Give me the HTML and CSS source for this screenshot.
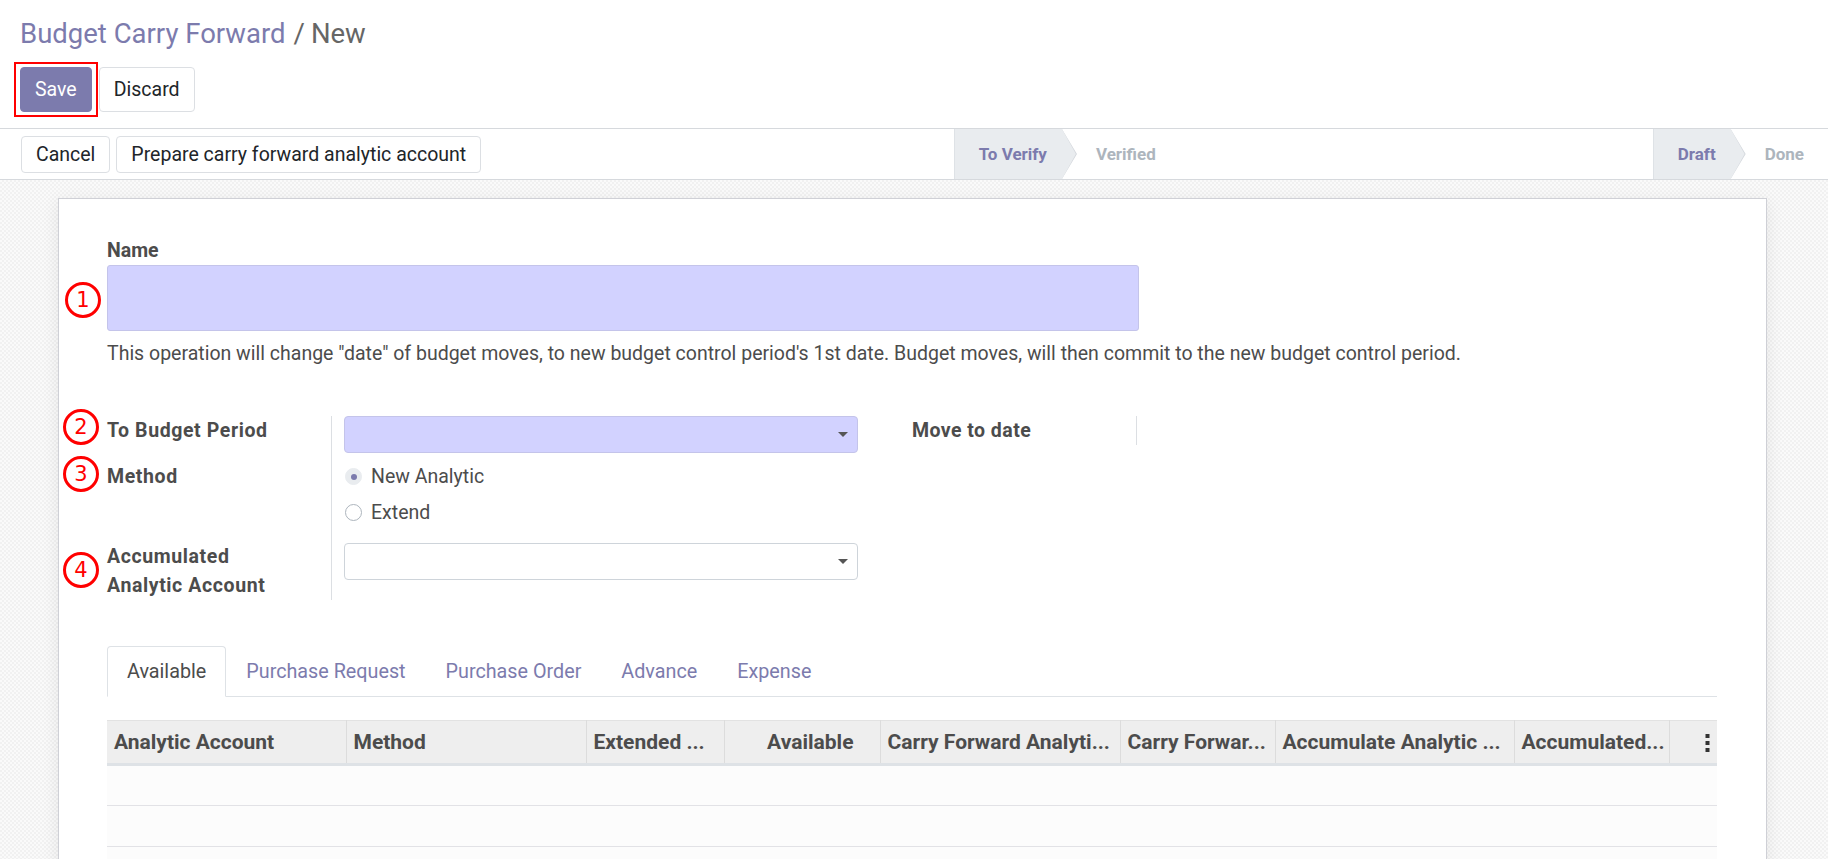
FILE: index.html
```html
<!DOCTYPE html>
<html>
<head>
<meta charset="utf-8">
<title>Budget Carry Forward / New</title>
<link rel="stylesheet" href="styles.css">
</head>
<body>
<div class="cp">
  <div class="breadcrumb"><span class="bc-link">Budget Carry Forward</span><span class="bc-sep">/</span><span class="bc-cur">New</span></div>
  <div class="cp-buttons">
    <button class="btn btn-primary btn-marked">Save</button>
    <button class="btn btn-secondary">Discard</button>
  </div>
</div>
<div class="form-header">
  <div class="header-buttons">
    <button class="btn btn-secondary btn-sm">Cancel</button>
    <button class="btn btn-secondary btn-sm">Prepare carry forward analytic account</button>
  </div>
  <div class="statusbar sb1">
    <span class="sb-item active first">To Verify</span>
    <span class="sb-item">Verified</span>
  </div>
  <div class="statusbar sb2">
    <span class="sb-item active first">Draft</span>
    <span class="sb-item last">Done</span>
  </div>
</div>
<div class="bg">
  <div class="sheet">
    <div class="field-label">Name</div>
    <div class="title-input"><span class="mark m1">1</span></div>
    <div class="help">This operation will change "date" of budget moves, to new budget control period's 1st date. Budget moves, will then commit to the new budget control period.</div>

    <div class="groups">
      <div class="group">
        <div class="g-label r1"><span class="mark m2">2</span>To Budget Period</div>
        <div class="g-field r1f">
          <div class="select required"><span class="caret"></span></div>
        </div>
        <div class="g-label r2"><span class="mark m3">3</span>Method</div>
        <div class="g-field r2f">
          <div class="radio-row"><span class="radio checked"><span class="dot"></span></span>New Analytic</div>
          <div class="radio-row second"><span class="radio"></span>Extend</div>
        </div>
        <div class="g-label r3"><span class="mark m4">4</span>Accumulated<br>Analytic Account</div>
        <div class="g-field r3f">
          <div class="select"><span class="caret"></span></div>
        </div>
      </div>
      <div class="group">
        <div class="g-label short">Move to date</div>
        <div class="g-field"></div>
      </div>
    </div>

    <div class="tabs">
      <span class="tab active">Available</span>
      <span class="tab">Purchase Request</span>
      <span class="tab">Purchase Order</span>
      <span class="tab">Advance</span>
      <span class="tab">Expense</span>
    </div>

    <table class="list">
      <colgroup>
        <col class="c239"><col class="c240"><col class="c138"><col class="c156"><col class="c240"><col class="c155"><col class="c239"><col class="c155"><col class="c48">
      </colgroup>
      <thead>
        <tr>
          <th>Analytic Account</th>
          <th>Method</th>
          <th>Extended ...</th>
          <th class="num">Available</th>
          <th>Carry Forward Analyti...</th>
          <th>Carry Forwar...</th>
          <th>Accumulate Analytic ...</th>
          <th>Accumulated...</th>
          <th class="opt"><svg class="kebab" width="5" height="18" viewBox="0 0 5 18"><rect x="0.5" y="0" width="4" height="4" fill="#333"/><rect x="0.5" y="7" width="4" height="4" fill="#333"/><rect x="0.5" y="14" width="4" height="4" fill="#333"/></svg></th>
        </tr>
      </thead>
      <tbody>
        <tr><td></td><td></td><td></td><td></td><td></td><td></td><td></td><td></td><td></td></tr>
        <tr><td></td><td></td><td></td><td></td><td></td><td></td><td></td><td></td><td></td></tr>
        <tr><td></td><td></td><td></td><td></td><td></td><td></td><td></td><td></td><td></td></tr>
      </tbody>
    </table>
  </div>
</div>
</body>
</html>
```

FILE: styles.css
```css
* { box-sizing: border-box; }
html, body { margin: 0; padding: 0; }
body {
  font-family: Roboto, "Liberation Sans", sans-serif;
  font-size: 19.5px;
  line-height: 29px;
  color: #4c4c4c;
  height: 859px;
  overflow: hidden;
  display: flex;
  flex-direction: column;
  background: #fff;
}

/* control panel */
.cp { padding: 14px 20px 16px 20px; }
.breadcrumb { font-size: 27.5px; line-height: 40px; height: 40px; margin-bottom: 13px; white-space: nowrap; }
.bc-link { color: #7c7bad; }
.bc-sep { color: #666; padding: 0 6px 0 8px; }
.bc-cur { color: #666; }
.cp-buttons { display: flex; gap: 7px; height: 45px; }

.btn {
  font-family: inherit;
  font-size: 19.5px;
  line-height: 29px;
  padding: 0 14px;
  border-radius: 4px;
  border: 1px solid #dcdfe3;
  background: #fff;
  color: #212529;
  height: 45px;
  cursor: pointer;
}
.btn-primary { background: #7c7bad; border-color: #7c7bad; color: #fff; }
.btn-marked { position: relative; }
.btn-marked::after {
  content: "";
  position: absolute;
  left: -7px;
  top: -6px;
  right: -7px;
  bottom: -6px;
  border: 2px solid #f00;
}
.btn-sm { height: 37px; }

/* form header / statusbar */
.form-header {
  display: flex;
  align-items: center;
  height: 52px;
  border-top: 1px solid #d6d9dd;
  border-bottom: 1px solid #d6d9dd;
  padding-left: 21px;
}
.header-buttons { display: flex; gap: 6px; }
.statusbar { display: flex; height: 50px; }
.sb1 { margin-left: auto; }
.sb2 { margin-left: 482px; }
.sb-item {
  position: relative;
  display: block;
  height: 50px;
  line-height: 50px;
  font-size: 17px;
  font-weight: bold;
  color: #adb5bd;
  padding: 0 15px 0 34px;
  white-space: nowrap;
}
.sb-item.first { padding-left: 24px; }
.sb-item.last { padding-right: 24px; }
.sb-item.active { background: #e9ecef; color: #7c7bad; border-left: 1px solid #dee2e6; }
.sb-item.active::before,
.sb-item.active::after {
  content: "";
  position: absolute;
  top: 0;
  height: 50px;
  clip-path: polygon(0 0, 100% 50%, 0 100%);
  z-index: 1;
}
.sb-item.active::before { right: -15px; width: 15px; background: #d3d7dc; }
.sb-item.active::after { right: -14px; width: 14px; background: #e9ecef; }

/* background + sheet */
.bg {
  flex: 1;
  padding: 18px 61px 0 58px;
  background-color: #f6f6f6;
  background-image: repeating-conic-gradient(#f1f1f1 0 25%, #fafafa 0 50%);
  background-size: 4px 4px;
  min-height: 0;
}
.sheet {
  background: #fff;
  border: 1px solid #cfd0d6;
  box-shadow: 0 4px 16px rgba(0, 0, 0, 0.08);
  padding: 37px 49px 0 48px;
  height: 800px;
}

.field-label { font-weight: bold; }
.title-input {
  position: relative;
  width: 1032px;
  height: 66px;
  background: #d2d2ff;
  border: 1px solid #c4c4ea;
  border-radius: 3px;
}
.help { margin-top: 8px; white-space: nowrap; }

.mark {
  position: absolute;
  width: 36px;
  height: 36px;
  border: 3px solid #f00;
  border-radius: 50%;
  color: #f00;
  font-family: "DejaVu Sans", sans-serif;
  font-size: 21px;
  font-weight: normal;
  letter-spacing: 0;
  line-height: 1;
  display: flex;
  align-items: center;
  justify-content: center;
  background: #fff;
}
.m1 { left: -43px; top: 16px; }
.m2 { left: -44px; top: -7px; }
.m3 { left: -44px; top: -6px; }
.m4 { left: -44px; top: 10px; }

/* groups */
.groups { display: grid; grid-template-columns: 805px 805px; margin-top: 48px; }
.group { display: grid; grid-template-columns: 225px 1fr; align-content: start; }
.g-label {
  position: relative;
  font-weight: bold;
  letter-spacing: 0.6px;
  border-right: 1px solid #dcdfe3;
  padding-right: 8px;
}
.g-label.short { height: 29px; letter-spacing: 0.45px; }
.g-field { padding-left: 12px; padding-right: 53px; }
.r1 { padding-bottom: 17px; }
.r1f { padding-bottom: 9px; }
.r2 { padding-bottom: 51px; }
.r2f { padding-bottom: 15px; }
.r3f { padding-top: 1px; }

.select {
  width: 514px;
  height: 37px;
  border: 1px solid #ced4da;
  border-radius: 4px;
  background: #fff;
  display: flex;
  align-items: center;
  justify-content: flex-end;
  padding-right: 9px;
}
.select.required { background: #d2d2ff; border-color: #c4c4ea; }
.caret {
  width: 0;
  height: 0;
  border-left: 5px solid transparent;
  border-right: 5px solid transparent;
  border-top: 5px solid #555;
}

.radio-row { display: flex; align-items: center; height: 29px; }
.radio-row.second { margin-top: 7px; }
.radio {
  width: 17px;
  height: 17px;
  border-radius: 50%;
  border: 1px solid #adb5bd;
  background: #fff;
  margin-right: 9px;
  margin-left: 1px;
  display: flex;
  align-items: center;
  justify-content: center;
  flex: none;
}
.radio.checked { background: #e9ecef; border-color: #e9ecef; }
.dot { width: 6px; height: 6px; border-radius: 50%; background: #7c7bad; }

/* tabs */
.tabs {
  display: flex;
  margin-top: 46px;
  border-bottom: 1px solid #dee2e6;
  width: 1610px;
}
.tab {
  display: block;
  padding: 10px 19px;
  font-size: 19.75px;
  line-height: 29px;
  color: #7c7bad;
  border: 1px solid transparent;
  border-top-left-radius: 4px;
  border-top-right-radius: 4px;
  margin-bottom: -1px;
  white-space: nowrap;
}
.tab.active { color: #4c4c4c; border-color: #dee2e6 #dee2e6 #fff; background: #fff; }

/* list */
.list {
  margin-top: 23px;
  width: 1610px;
  border-collapse: collapse;
  table-layout: fixed;
}
.c239 { width: 239px; }
.c240 { width: 240px; }
.c138 { width: 138px; }
.c156 { width: 156px; }
.c155 { width: 155px; }
.c48 { width: 48px; }
.list th {
  background: #eeeeee;
  height: 44px;
  padding: 0 7px;
  text-align: left;
  font-size: 21px;
  font-weight: bold;
  color: #4c4c4c;
  border-right: 1px solid #dcdcdc;
  border-top: 1px solid #e2e2e2;
  border-bottom: 3px solid #dee2e6;
  white-space: nowrap;
  overflow: hidden;
  vertical-align: middle;
}
.list th:last-child { border-right: none; }
.list th.num { text-align: right; padding-right: 26px; }
.list th.opt { text-align: right; padding-right: 7px; }
.kebab { display: inline-block; vertical-align: middle; }
.list td {
  height: 41px;
  background: #fcfcfc;
  border-bottom: 1px solid #e2e2e6;
  padding: 0;
}
```
